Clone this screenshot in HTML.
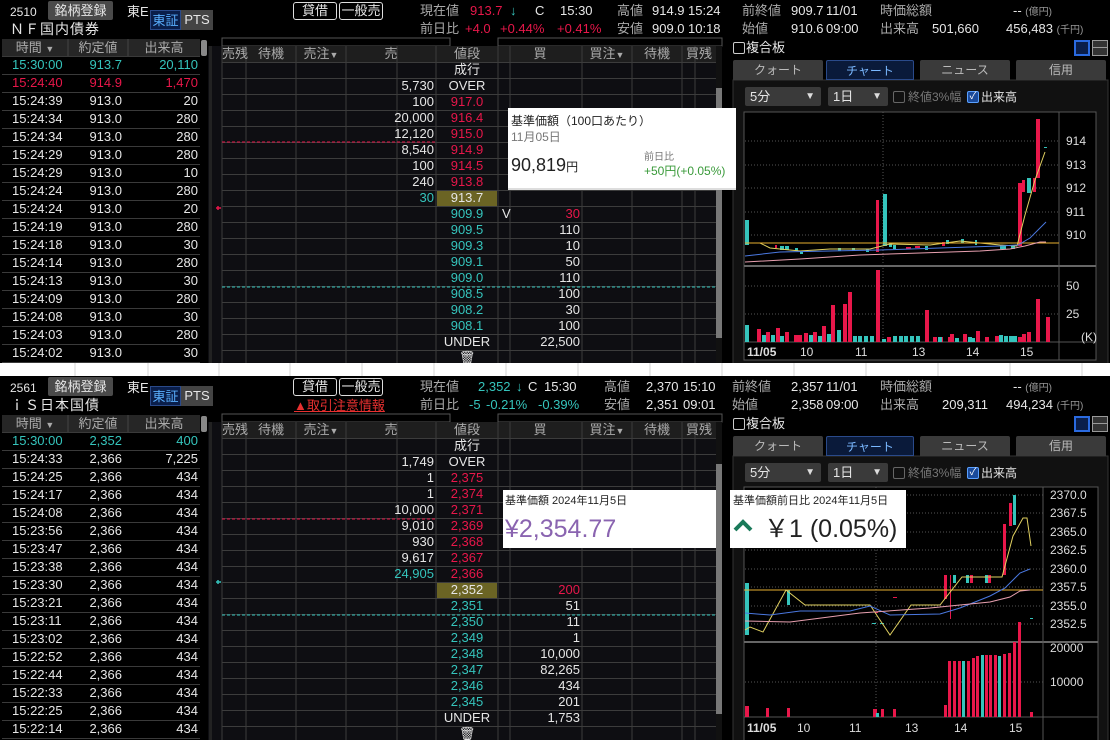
<!DOCTYPE html>
<html><head><meta charset="utf-8">
<style>
*{margin:0;padding:0;box-sizing:border-box}
body{width:1113px;height:740px;overflow:hidden;background:#fff;font-family:"Liberation Sans","Noto Sans CJK JP",sans-serif;font-size:13px;color:#e6e6e6;position:relative}
.p{position:absolute;left:0;width:1110px;background:#000;overflow:hidden}
.t{position:absolute;white-space:nowrap;line-height:16px}
.r{text-align:right}
.c{text-align:center}
.g{color:#aaa}
.red{color:#e8174a}
.tl{color:#35c4bc}
.btn{position:absolute;border:1px solid #ddd;border-radius:3px;text-align:center;line-height:16px;height:18px}
.tab{position:absolute;top:60px;height:20px;background:#3a3a3a;color:#bbb;text-align:center;line-height:20px;font-size:12px;border-radius:2px 2px 0 0}
.dd{position:absolute;top:87px;height:19px;background:#3a3a3a;border-radius:2px;line-height:19px;padding-left:5px;font-size:13px}
.dd i{position:absolute;right:6px;top:0;font-style:normal;font-size:10px;color:#ddd}
.cb{position:absolute;width:12px;height:12px;border:1px solid #888;border-radius:2px}
.ax{position:absolute;font-size:12px;line-height:14px;color:#ddd}
.lr{position:relative;height:18px}
</style></head><body>

<svg style="position:absolute;left:0;top:0" width="1113" height="740">
<rect width="1113" height="740" fill="#fff"/>
<g stroke="#d4d4d4"><line x1="75" y1="363" x2="75" y2="376"/><line x1="148" y1="363" x2="148" y2="376"/><line x1="219" y1="363" x2="219" y2="376"/><line x1="290" y1="363" x2="290" y2="376"/><line x1="362" y1="363" x2="362" y2="376"/><line x1="434" y1="363" x2="434" y2="376"/><line x1="506" y1="363" x2="506" y2="376"/><line x1="578" y1="363" x2="578" y2="376"/><line x1="650" y1="363" x2="650" y2="376"/><line x1="722" y1="363" x2="722" y2="376"/><line x1="794" y1="363" x2="794" y2="376"/><line x1="866" y1="363" x2="866" y2="376"/><line x1="938" y1="363" x2="938" y2="376"/><line x1="1010" y1="363" x2="1010" y2="376"/><line x1="1082" y1="363" x2="1082" y2="376"/></g>
</svg>

<!-- ================= TOP PANEL ================= -->
<div class="p" style="top:0;height:363px">
<svg style="position:absolute;left:0;top:0" width="1110" height="363">
<defs>
<pattern id="rl" x="0" y="56" width="10" height="18" patternUnits="userSpaceOnUse"><line x1="0" y1="0.5" x2="10" y2="0.5" stroke="#3a3a3a"/></pattern>
<pattern id="bl" x="0" y="62" width="10" height="16" patternUnits="userSpaceOnUse"><line x1="0" y1="0.5" x2="10" y2="0.5" stroke="#3c3c3c"/></pattern>
</defs>
<rect x="2" y="39" width="198" height="330" fill="#000"/>
<rect x="2" y="39" width="198" height="17" fill="#262626"/>
<rect x="2" y="56" width="198" height="310" fill="url(#rl)"/>
<line x1="68" y1="39" x2="68" y2="56" stroke="#444"/><line x1="128" y1="39" x2="128" y2="56" stroke="#444"/>
<rect x="201" y="40" width="6" height="16" rx="2" fill="#888"/>
<rect x="208" y="46" width="514" height="320" fill="#0e0e12"/>
<rect x="222" y="38" width="228" height="8" fill="none" stroke="#555"/>
<rect x="498" y="38" width="224" height="8" fill="none" stroke="#555"/>
<rect x="222" y="46" width="494" height="16" fill="#1e1e1e"/>
<rect x="222" y="62" width="494" height="304" fill="url(#bl)"/>
<g stroke="#3c3c3c"><line x1="222" y1="46" x2="222" y2="366"/><line x1="246" y1="46" x2="246" y2="366"/><line x1="296" y1="46" x2="296" y2="366"/><line x1="346" y1="46" x2="346" y2="366"/><line x1="397" y1="46" x2="397" y2="366"/><line x1="436" y1="46" x2="436" y2="366"/><line x1="498" y1="46" x2="498" y2="366"/><line x1="510" y1="46" x2="510" y2="366"/><line x1="582" y1="46" x2="582" y2="366"/><line x1="632" y1="46" x2="632" y2="366"/><line x1="682" y1="46" x2="682" y2="366"/><line x1="695" y1="46" x2="695" y2="366"/></g>
<rect x="716" y="46" width="6" height="320" fill="#111"/><rect x="716" y="88" width="6" height="250" fill="#777"/>
<rect x="209" y="46" width="3" height="320" fill="#222"/>
<rect x="437" y="191" width="60" height="15" fill="#6b6424"/>
<line x1="222" y1="142" x2="436" y2="142" stroke="#e8174a" stroke-dasharray="3 2"/>
<line x1="222" y1="287" x2="716" y2="287" stroke="#35c4bc" stroke-dasharray="3 2"/>
<path d="M216 208h5M218 206v4" stroke="#e8174a" stroke-width="1.5"/>
<rect x="733" y="80" width="375" height="286" fill="#111" stroke="#333"/>
<rect x="744" y="112" width="352" height="248" fill="#000" stroke="#555"/>
<line x1="744" y1="266" x2="1096" y2="266" stroke="#666" stroke-width="2"/>
<line x1="744" y1="342" x2="1096" y2="342" stroke="#555"/>
<line x1="1059" y1="112" x2="1059" y2="360" stroke="#555"/>
<g stroke="#555" stroke-dasharray="1 2"><line x1="745" y1="141" x2="1059" y2="141"/><line x1="745" y1="165" x2="1059" y2="165"/><line x1="745" y1="188" x2="1059" y2="188"/><line x1="745" y1="212" x2="1059" y2="212"/><line x1="745" y1="235" x2="1059" y2="235"/><line x1="745" y1="286" x2="1059" y2="286"/><line x1="745" y1="314" x2="1059" y2="314"/><line x1="883" y1="112" x2="883" y2="342"/></g>
<rect x="745" y="220" width="4" height="25" fill="#35c4bc"/>
<g fill="#35c4bc"><rect x="780" y="246" width="4" height="4"/><rect x="785" y="246" width="4" height="4"/><rect x="795" y="248" width="3" height="3"/><rect x="800" y="251" width="3" height="3"/><rect x="838" y="248" width="3" height="3"/><rect x="852" y="248" width="3" height="3"/><rect x="866" y="249" width="3" height="3"/><rect x="889" y="243" width="3" height="4"/><rect x="893" y="245" width="3" height="4"/><rect x="925" y="246" width="3" height="4"/><rect x="946" y="240" width="3" height="4"/><rect x="961" y="239" width="3" height="4"/><rect x="975" y="240" width="2" height="5"/><rect x="1000" y="246" width="6" height="3"/><rect x="1011" y="245" width="4" height="4"/><rect x="1027" y="178" width="4" height="15"/><rect x="1044" y="147" width="3" height="1"/></g>
<rect x="883" y="194" width="4" height="52" fill="#35c4bc"/>
<g fill="#e8174a"><rect x="775" y="245" width="2" height="3"/><rect x="876" y="200" width="3" height="52"/><rect x="906" y="247" width="5" height="2"/><rect x="915" y="246" width="5" height="2"/><rect x="942" y="242" width="3" height="4"/><rect x="1018" y="183" width="4" height="63"/><rect x="1022" y="180" width="3" height="12"/><rect x="1033" y="178" width="3" height="14"/><rect x="1036" y="119" width="4" height="59"/></g>
<polyline fill="none" stroke="#e0d060" stroke-width="1" points="745,243 760,243 770,248 800,251 830,249 870,249 890,244 930,245 960,241 1000,245 1017,246 1025,215 1035,180 1045,152"/>
<line x1="745" y1="243" x2="1059" y2="243" stroke="#e8b030"/>
<polyline fill="none" stroke="#4a78e0" points="745,256 780,252 830,251 880,250 940,248 1000,246 1018,245 1030,238 1046,222"/>
<polyline fill="none" stroke="#e8a0b0" points="745,262 800,259 860,255 920,253 980,251 1010,249 1025,246 1040,242 1046,242"/>
<g fill="#e8174a"><rect x="757" y="329" width="4" height="13"/><rect x="766" y="332" width="4" height="10"/><rect x="776" y="328" width="4" height="14"/><rect x="785" y="332" width="4" height="10"/><rect x="794" y="335" width="4" height="7"/><rect x="798" y="335" width="4" height="7"/><rect x="804" y="333" width="4" height="9"/><rect x="813" y="332" width="4" height="10"/><rect x="822" y="326" width="4" height="16"/><rect x="831" y="305" width="4" height="37"/><rect x="843" y="304" width="4" height="38"/><rect x="848" y="292" width="4" height="50"/><rect x="876" y="270" width="4" height="72"/><rect x="887" y="337" width="4" height="5"/><rect x="933" y="337" width="4" height="5"/><rect x="939" y="337" width="4" height="5"/><rect x="948" y="337" width="4" height="5"/><rect x="925" y="310" width="4" height="32"/><rect x="950" y="334" width="4" height="8"/><rect x="963" y="334" width="4" height="8"/><rect x="976" y="331" width="4" height="11"/><rect x="985" y="337" width="4" height="5"/><rect x="995" y="336" width="4" height="6"/><rect x="1018" y="337" width="4" height="5"/><rect x="1022" y="334" width="4" height="8"/><rect x="1027" y="332" width="4" height="10"/><rect x="1036" y="299" width="4" height="43"/><rect x="1046" y="317" width="4" height="25"/></g>
<g fill="#35c4bc"><rect x="745" y="325" width="4" height="17"/><rect x="762" y="335" width="4" height="7"/><rect x="771" y="335" width="4" height="7"/><rect x="780" y="336" width="4" height="6"/><rect x="809" y="335" width="4" height="7"/><rect x="818" y="336" width="4" height="6"/><rect x="827" y="334" width="4" height="8"/><rect x="837" y="330" width="4" height="12"/><rect x="853" y="336" width="4" height="6"/><rect x="858" y="336" width="4" height="6"/><rect x="864" y="336" width="4" height="6"/><rect x="870" y="336" width="4" height="6"/><rect x="882" y="339" width="4" height="3"/><rect x="893" y="336" width="4" height="6"/><rect x="899" y="336" width="4" height="6"/><rect x="904" y="336" width="4" height="6"/><rect x="910" y="336" width="4" height="6"/><rect x="916" y="336" width="4" height="6"/><rect x="938" y="337" width="4" height="5"/><rect x="955" y="338" width="4" height="4"/><rect x="968" y="337" width="4" height="5"/><rect x="971" y="338" width="4" height="4"/><rect x="999" y="335" width="4" height="7"/><rect x="1004" y="336" width="4" height="6"/><rect x="1009" y="336" width="4" height="6"/><rect x="1013" y="336" width="4" height="6"/></g>
</svg>

<div class="t" style="left:10px;top:4px;font-size:12px">2510</div>
<div class="t c" style="left:48px;top:1px;width:65px;height:19px;background:#4a4a4a;border-radius:2px;line-height:19px">銘柄登録</div>
<div class="t" style="left:127px;top:4px">東E</div>
<div class="t c" style="left:150px;top:10px;width:31px;height:20px;line-height:19px;background:#0a1e4a;border:1px solid #2a4a8a;color:#5ab0ff">東証</div>
<div class="t c" style="left:181px;top:10px;width:32px;height:20px;line-height:20px;background:#444">PTS</div>
<div class="t" style="left:10px;top:21px;font-size:14px;letter-spacing:1px">ＮＦ国内債券</div>
<div class="btn" style="left:293px;top:2px;width:44px">貸借</div>
<div class="btn" style="left:339px;top:2px;width:44px">一般売</div>
<div class="t g" style="left:420px;top:3px">現在値</div>
<div class="t red" style="left:470px;top:3px">913.7</div><div class="t tl" style="left:510px;top:3px">↓</div>
<div class="t" style="left:535px;top:3px">C</div><div class="t" style="left:560px;top:3px">15:30</div>
<div class="t g" style="left:617px;top:3px">高値</div><div class="t" style="left:652px;top:3px">914.9</div><div class="t" style="left:688px;top:3px">15:24</div>
<div class="t g" style="left:742px;top:3px">前終値</div><div class="t" style="left:791px;top:3px">909.7</div><div class="t" style="left:826px;top:3px">11/01</div>
<div class="t g" style="left:880px;top:3px">時価総額</div><div class="t" style="left:1013px;top:3px">-- <span style="font-size:10px;color:#999">(億円)</span></div>
<div class="t g" style="left:420px;top:21px">前日比</div>
<div class="t red" style="left:465px;top:21px">+4.0</div><div class="t red" style="left:500px;top:21px">+0.44%</div><div class="t red" style="left:557px;top:21px">+0.41%</div>
<div class="t g" style="left:617px;top:21px">安値</div><div class="t" style="left:652px;top:21px">909.0</div><div class="t" style="left:688px;top:21px">10:18</div>
<div class="t g" style="left:742px;top:21px">始値</div><div class="t" style="left:791px;top:21px">910.6</div><div class="t" style="left:826px;top:21px">09:00</div>
<div class="t g" style="left:880px;top:21px">出来高</div><div class="t" style="left:932px;top:21px">501,660</div><div class="t" style="left:1006px;top:21px">456,483 <span style="font-size:10px;color:#999">(千円)</span></div>

<div class="t g c" style="left:2px;top:40px;width:66px">時間 <span style="font-size:9px">▼</span></div>
<div class="t g c" style="left:68px;top:40px;width:60px">約定値</div>
<div class="t g c" style="left:128px;top:40px;width:72px">出来高</div>
<div style="position:absolute;left:12px;top:56px;width:186px;line-height:18px">
<div class="lr tl"><span>15:30:00</span><span style="position:absolute;right:76px">913.7</span><span style="position:absolute;right:0">20,110</span></div>
<div class="lr red"><span>15:24:40</span><span style="position:absolute;right:76px">914.9</span><span style="position:absolute;right:0">1,470</span></div>
<div class="lr"><span>15:24:39</span><span style="position:absolute;right:76px">913.0</span><span style="position:absolute;right:0">20</span></div>
<div class="lr"><span>15:24:34</span><span style="position:absolute;right:76px">913.0</span><span style="position:absolute;right:0">280</span></div>
<div class="lr"><span>15:24:34</span><span style="position:absolute;right:76px">913.0</span><span style="position:absolute;right:0">280</span></div>
<div class="lr"><span>15:24:29</span><span style="position:absolute;right:76px">913.0</span><span style="position:absolute;right:0">280</span></div>
<div class="lr"><span>15:24:29</span><span style="position:absolute;right:76px">913.0</span><span style="position:absolute;right:0">10</span></div>
<div class="lr"><span>15:24:24</span><span style="position:absolute;right:76px">913.0</span><span style="position:absolute;right:0">280</span></div>
<div class="lr"><span>15:24:24</span><span style="position:absolute;right:76px">913.0</span><span style="position:absolute;right:0">20</span></div>
<div class="lr"><span>15:24:19</span><span style="position:absolute;right:76px">913.0</span><span style="position:absolute;right:0">280</span></div>
<div class="lr"><span>15:24:18</span><span style="position:absolute;right:76px">913.0</span><span style="position:absolute;right:0">30</span></div>
<div class="lr"><span>15:24:14</span><span style="position:absolute;right:76px">913.0</span><span style="position:absolute;right:0">280</span></div>
<div class="lr"><span>15:24:13</span><span style="position:absolute;right:76px">913.0</span><span style="position:absolute;right:0">30</span></div>
<div class="lr"><span>15:24:09</span><span style="position:absolute;right:76px">913.0</span><span style="position:absolute;right:0">280</span></div>
<div class="lr"><span>15:24:08</span><span style="position:absolute;right:76px">913.0</span><span style="position:absolute;right:0">30</span></div>
<div class="lr"><span>15:24:03</span><span style="position:absolute;right:76px">913.0</span><span style="position:absolute;right:0">280</span></div>
<div class="lr"><span>15:24:02</span><span style="position:absolute;right:76px">913.0</span><span style="position:absolute;right:0">30</span></div>
</div>

<div class="t g c" style="left:222px;top:46px;width:24px">売残</div>
<div class="t g c" style="left:246px;top:46px;width:50px">待機</div>
<div class="t g c" style="left:296px;top:46px;width:50px">売注<span style="font-size:9px">▼</span></div>
<div class="t g c" style="left:346px;top:46px;width:90px">売</div>
<div class="t g c" style="left:436px;top:46px;width:62px">値段</div>
<div class="t g c" style="left:498px;top:46px;width:84px">買</div>
<div class="t g c" style="left:582px;top:46px;width:50px">買注<span style="font-size:9px">▼</span></div>
<div class="t g c" style="left:632px;top:46px;width:50px">待機</div>
<div class="t g c" style="left:682px;top:46px;width:34px">買残</div>
<div style="position:absolute;left:436px;top:62px;width:62px;line-height:16px;text-align:center">
<div>成行</div><div>OVER</div><div class="red">917.0</div><div class="red">916.4</div><div class="red">915.0</div><div class="red">914.9</div><div class="red">914.5</div><div class="red">913.8</div><div>913.7</div><div class="tl">909.9</div><div class="tl">909.5</div><div class="tl">909.3</div><div class="tl">909.1</div><div class="tl">909.0</div><div class="tl">908.5</div><div class="tl">908.2</div><div class="tl">908.1</div><div>UNDER</div><div>🗑</div>
</div>
<div style="position:absolute;left:346px;top:62px;width:88px;line-height:16px;text-align:right">
<div>&nbsp;</div><div>5,730</div><div>100</div><div>20,000</div><div>12,120</div><div>8,540</div><div>100</div><div>240</div><div class="tl">30</div>
</div>
<div style="position:absolute;left:498px;top:62px;width:82px;line-height:16px;text-align:right">
<div>&nbsp;</div><div>&nbsp;</div><div>&nbsp;</div><div>&nbsp;</div><div>&nbsp;</div><div>&nbsp;</div><div>&nbsp;</div><div>&nbsp;</div><div>&nbsp;</div><div class="red">30</div><div>110</div><div>10</div><div>50</div><div>110</div><div>100</div><div>30</div><div>100</div><div>22,500</div>
</div>
<div class="t" style="left:502px;top:206px">V</div>

<div class="cb" style="left:733px;top:42px;border-color:#ccc"></div><div class="t" style="left:746px;top:40px">複合板</div>
<div style="position:absolute;left:1074px;top:40px;width:16px;height:16px;border:2px solid #2a6ae0;background:#0a1e4a"></div>
<div style="position:absolute;left:1092px;top:40px;width:16px;height:16px;border:1px solid #999;background:#333"><div style="position:absolute;left:0;top:6px;width:14px;height:1px;background:#999"></div></div>
<div class="tab" style="left:733px;width:90px">クォート</div>
<div class="tab" style="left:826px;width:88px;background:#0a1a3a;border:1px solid #2a4a8a;color:#7ab8ff">チャート</div>
<div class="tab" style="left:920px;width:90px">ニュース</div>
<div class="tab" style="left:1016px;width:90px">信用</div>
<div class="dd" style="left:745px;width:76px">5分<i>▼</i></div>
<div class="dd" style="left:828px;width:60px">1日<i>▼</i></div>
<div class="cb" style="left:893px;top:91px;border-color:#666"></div><div class="t" style="left:908px;top:89px;color:#777;font-size:12px">終値3%幅</div>
<div class="cb" style="left:967px;top:91px;border-color:#5aa0ff;background:#1a4a9a;color:#fff;font-size:10px;line-height:10px;text-align:center">✓</div><div class="t" style="left:981px;top:89px;font-size:12px">出来高</div>
<div class="ax" style="left:1066px;top:134px">914</div><div class="ax" style="left:1066px;top:158px">913</div><div class="ax" style="left:1066px;top:181px">912</div><div class="ax" style="left:1066px;top:205px">911</div><div class="ax" style="left:1066px;top:228px">910</div>
<div class="ax" style="left:1066px;top:279px">50</div><div class="ax" style="left:1066px;top:307px">25</div><div class="ax" style="left:1081px;top:330px">(K)</div>
<div class="ax" style="left:747px;top:345px;font-weight:bold">11/05</div><div class="ax" style="left:800px;top:345px">10</div><div class="ax" style="left:855px;top:345px">11</div><div class="ax" style="left:912px;top:345px">13</div><div class="ax" style="left:966px;top:345px">14</div><div class="ax" style="left:1020px;top:345px">15</div>

<div style="position:absolute;left:508px;top:108px;width:228px;height:82px;background:#fff;border-bottom:2px solid #ddd;color:#222">
<div class="t" style="left:3px;top:5px;font-size:12px">基準価額（100口あたり）</div>
<div class="t" style="left:3px;top:21px;font-size:12px;color:#777">11月05日</div>
<div class="t" style="left:3px;top:47px;font-size:18px;line-height:20px">90,819<span style="font-size:12px">円</span></div>
<div class="t" style="left:136px;top:42px;font-size:10px;color:#777">前日比</div>
<div class="t" style="left:136px;top:55px;font-size:12px;color:#3a9a3a">+50円(+0.05%)</div>
</div>
</div>

<!-- ================= BOTTOM PANEL ================= -->
<div class="p" style="top:376px;height:364px">
<svg style="position:absolute;left:0;top:0" width="1110" height="364">
<defs>
<pattern id="rl2" x="0" y="56" width="10" height="18" patternUnits="userSpaceOnUse"><line x1="0" y1="0.5" x2="10" y2="0.5" stroke="#3a3a3a"/></pattern>
<pattern id="bl2" x="0" y="62" width="10" height="16" patternUnits="userSpaceOnUse"><line x1="0" y1="0.5" x2="10" y2="0.5" stroke="#3c3c3c"/></pattern>
</defs>
<rect x="2" y="39" width="198" height="330" fill="#000"/>
<rect x="2" y="39" width="198" height="17" fill="#262626"/>
<rect x="2" y="56" width="198" height="310" fill="url(#rl2)"/>
<line x1="68" y1="39" x2="68" y2="56" stroke="#444"/><line x1="128" y1="39" x2="128" y2="56" stroke="#444"/>
<rect x="201" y="40" width="6" height="16" rx="2" fill="#888"/>
<rect x="208" y="46" width="514" height="320" fill="#0e0e12"/>
<rect x="222" y="38" width="228" height="8" fill="none" stroke="#555"/>
<rect x="498" y="38" width="224" height="8" fill="none" stroke="#555"/>
<rect x="222" y="46" width="494" height="16" fill="#1e1e1e"/>
<rect x="222" y="62" width="494" height="304" fill="url(#bl2)"/>
<g stroke="#3c3c3c"><line x1="222" y1="46" x2="222" y2="366"/><line x1="246" y1="46" x2="246" y2="366"/><line x1="296" y1="46" x2="296" y2="366"/><line x1="346" y1="46" x2="346" y2="366"/><line x1="397" y1="46" x2="397" y2="366"/><line x1="436" y1="46" x2="436" y2="366"/><line x1="498" y1="46" x2="498" y2="366"/><line x1="510" y1="46" x2="510" y2="366"/><line x1="582" y1="46" x2="582" y2="366"/><line x1="632" y1="46" x2="632" y2="366"/><line x1="682" y1="46" x2="682" y2="366"/><line x1="695" y1="46" x2="695" y2="366"/></g>
<rect x="716" y="46" width="6" height="320" fill="#111"/><rect x="716" y="88" width="6" height="250" fill="#777"/>
<rect x="209" y="46" width="3" height="320" fill="#222"/>
<rect x="437" y="207" width="60" height="15" fill="#6b6424"/>
<line x1="222" y1="143" x2="436" y2="143" stroke="#e8174a" stroke-dasharray="3 2"/>
<line x1="222" y1="239" x2="716" y2="239" stroke="#35c4bc" stroke-dasharray="3 2"/>
<path d="M216 206h5M218 204v4" stroke="#35c4bc" stroke-width="1.5"/>
<rect x="733" y="80" width="375" height="290" fill="#111" stroke="#333"/>
<rect x="744" y="111" width="354" height="260" fill="#000" stroke="#555"/>
<line x1="744" y1="266" x2="1098" y2="266" stroke="#666" stroke-width="2"/>
<line x1="744" y1="341" x2="1098" y2="341" stroke="#555"/>
<line x1="1043" y1="111" x2="1043" y2="364" stroke="#555"/>
<g stroke="#555" stroke-dasharray="1 2"><line x1="745" y1="119" x2="1043" y2="119"/><line x1="745" y1="137" x2="1043" y2="137"/><line x1="745" y1="156" x2="1043" y2="156"/><line x1="745" y1="174" x2="1043" y2="174"/><line x1="745" y1="193" x2="1043" y2="193"/><line x1="745" y1="211" x2="1043" y2="211"/><line x1="745" y1="230" x2="1043" y2="230"/><line x1="745" y1="248" x2="1043" y2="248"/><line x1="745" y1="306" x2="1043" y2="306"/><line x1="876" y1="111" x2="876" y2="341"/></g>
<rect x="745" y="207" width="4" height="52" fill="#35c4bc"/>
<rect x="787" y="214" width="3" height="15" fill="#35c4bc"/>
<g fill="#e8174a"><rect x="944" y="199" width="3" height="24"/><rect x="950" y="199" width="1" height="44"/><rect x="970" y="199" width="3" height="8"/><rect x="988" y="199" width="3" height="8"/><rect x="1003" y="148" width="3" height="51"/><rect x="1009" y="127" width="3" height="23"/><rect x="875" y="236" width="3" height="1"/><rect x="893" y="221" width="4" height="1"/></g>
<g fill="#35c4bc"><rect x="953" y="199" width="3" height="8"/><rect x="966" y="199" width="3" height="8"/><rect x="985" y="199" width="3" height="8"/><rect x="1013" y="119" width="3" height="30"/><rect x="872" y="247" width="4" height="1"/><rect x="880" y="247" width="4" height="1"/><rect x="1030" y="242" width="3" height="1"/></g>
<line x1="744" y1="214" x2="1043" y2="214" stroke="#e8b030"/>
<polyline fill="none" stroke="#e0d060" points="745,254 750,251 763,256 786,214 805,229 870,229 890,259 911,229 940,229 962,201 1002,201 1013,160 1023,142 1027,142 1031,170"/>
<polyline fill="none" stroke="#4a78e0" points="745,237 770,239 800,235 850,235 870,230 890,239 940,238 960,232 990,220 1005,212 1020,197 1030,193"/>
<polyline fill="none" stroke="#e8a0b0" points="745,245 790,246 860,237 930,232 990,226 1010,221 1020,215 1030,214"/>
<g fill="#e8174a"><rect x="745" y="330" width="4" height="11"/><rect x="766" y="332" width="3" height="9"/><rect x="787" y="332" width="3" height="9"/><rect x="873" y="333" width="4" height="8"/><rect x="881" y="333" width="3" height="8"/><rect x="893" y="333" width="3" height="8"/><rect x="944" y="329" width="3" height="12"/><rect x="948" y="285" width="3" height="56"/><rect x="953" y="285" width="3" height="56"/><rect x="958" y="285" width="3" height="56"/><rect x="967" y="285" width="3" height="56"/><rect x="972" y="282" width="3" height="59"/><rect x="976" y="280" width="3" height="61"/><rect x="985" y="279" width="3" height="62"/><rect x="989" y="279" width="3" height="62"/><rect x="994" y="279" width="3" height="62"/><rect x="1003" y="278" width="3" height="63"/><rect x="1008" y="277" width="3" height="64"/><rect x="1013" y="266" width="3" height="75"/><rect x="1018" y="246" width="3" height="95"/><rect x="1030" y="336" width="3" height="5"/></g>
<g fill="#35c4bc"><rect x="962" y="285" width="3" height="56"/><rect x="981" y="279" width="3" height="62"/><rect x="998" y="280" width="3" height="61"/><rect x="876" y="337" width="3" height="4"/></g>
</svg>

<div class="t" style="left:10px;top:4px;font-size:12px">2561</div>
<div class="t c" style="left:48px;top:1px;width:65px;height:19px;background:#4a4a4a;border-radius:2px;line-height:19px">銘柄登録</div>
<div class="t" style="left:127px;top:4px">東E</div>
<div class="t c" style="left:150px;top:10px;width:31px;height:20px;line-height:19px;background:#0a1e4a;border:1px solid #2a4a8a;color:#5ab0ff">東証</div>
<div class="t c" style="left:181px;top:10px;width:32px;height:20px;line-height:20px;background:#444">PTS</div>
<div class="t" style="left:10px;top:21px;font-size:14px;letter-spacing:1px">ｉＳ日本国債</div>
<div class="btn" style="left:293px;top:2px;width:44px">貸借</div>
<div class="btn" style="left:339px;top:2px;width:44px">一般売</div>
<div class="t" style="left:294px;top:22px;color:#e83030;text-decoration:underline">▲取引注意情報</div>
<div class="t g" style="left:420px;top:3px">現在値</div>
<div class="t tl" style="left:478px;top:3px">2,352</div><div class="t tl" style="left:516px;top:3px">↓</div>
<div class="t" style="left:528px;top:3px">C</div><div class="t" style="left:544px;top:3px">15:30</div>
<div class="t g" style="left:604px;top:3px">高値</div><div class="t" style="left:646px;top:3px">2,370</div><div class="t" style="left:683px;top:3px">15:10</div>
<div class="t g" style="left:732px;top:3px">前終値</div><div class="t" style="left:791px;top:3px">2,357</div><div class="t" style="left:826px;top:3px">11/01</div>
<div class="t g" style="left:880px;top:3px">時価総額</div><div class="t" style="left:1013px;top:3px">-- <span style="font-size:10px;color:#999">(億円)</span></div>
<div class="t g" style="left:420px;top:21px">前日比</div>
<div class="t tl" style="left:469px;top:21px">-5</div><div class="t tl" style="left:486px;top:21px">-0.21%</div><div class="t tl" style="left:538px;top:21px">-0.39%</div>
<div class="t g" style="left:604px;top:21px">安値</div><div class="t" style="left:646px;top:21px">2,351</div><div class="t" style="left:683px;top:21px">09:01</div>
<div class="t g" style="left:732px;top:21px">始値</div><div class="t" style="left:791px;top:21px">2,358</div><div class="t" style="left:826px;top:21px">09:00</div>
<div class="t g" style="left:880px;top:21px">出来高</div><div class="t" style="left:942px;top:21px">209,311</div><div class="t" style="left:1006px;top:21px">494,234 <span style="font-size:10px;color:#999">(千円)</span></div>

<div class="t g c" style="left:2px;top:40px;width:66px">時間 <span style="font-size:9px">▼</span></div>
<div class="t g c" style="left:68px;top:40px;width:60px">約定値</div>
<div class="t g c" style="left:128px;top:40px;width:72px">出来高</div>
<div style="position:absolute;left:12px;top:56px;width:186px;line-height:18px">
<div class="lr tl"><span>15:30:00</span><span style="position:absolute;right:76px">2,352</span><span style="position:absolute;right:0">400</span></div>
<div class="lr"><span>15:24:33</span><span style="position:absolute;right:76px">2,366</span><span style="position:absolute;right:0">7,225</span></div>
<div class="lr"><span>15:24:25</span><span style="position:absolute;right:76px">2,366</span><span style="position:absolute;right:0">434</span></div>
<div class="lr"><span>15:24:17</span><span style="position:absolute;right:76px">2,366</span><span style="position:absolute;right:0">434</span></div>
<div class="lr"><span>15:24:08</span><span style="position:absolute;right:76px">2,366</span><span style="position:absolute;right:0">434</span></div>
<div class="lr"><span>15:23:56</span><span style="position:absolute;right:76px">2,366</span><span style="position:absolute;right:0">434</span></div>
<div class="lr"><span>15:23:47</span><span style="position:absolute;right:76px">2,366</span><span style="position:absolute;right:0">434</span></div>
<div class="lr"><span>15:23:38</span><span style="position:absolute;right:76px">2,366</span><span style="position:absolute;right:0">434</span></div>
<div class="lr"><span>15:23:30</span><span style="position:absolute;right:76px">2,366</span><span style="position:absolute;right:0">434</span></div>
<div class="lr"><span>15:23:21</span><span style="position:absolute;right:76px">2,366</span><span style="position:absolute;right:0">434</span></div>
<div class="lr"><span>15:23:11</span><span style="position:absolute;right:76px">2,366</span><span style="position:absolute;right:0">434</span></div>
<div class="lr"><span>15:23:02</span><span style="position:absolute;right:76px">2,366</span><span style="position:absolute;right:0">434</span></div>
<div class="lr"><span>15:22:52</span><span style="position:absolute;right:76px">2,366</span><span style="position:absolute;right:0">434</span></div>
<div class="lr"><span>15:22:44</span><span style="position:absolute;right:76px">2,366</span><span style="position:absolute;right:0">434</span></div>
<div class="lr"><span>15:22:33</span><span style="position:absolute;right:76px">2,366</span><span style="position:absolute;right:0">434</span></div>
<div class="lr"><span>15:22:25</span><span style="position:absolute;right:76px">2,366</span><span style="position:absolute;right:0">434</span></div>
<div class="lr"><span>15:22:14</span><span style="position:absolute;right:76px">2,366</span><span style="position:absolute;right:0">434</span></div>
</div>

<div class="t g c" style="left:222px;top:46px;width:24px">売残</div>
<div class="t g c" style="left:246px;top:46px;width:50px">待機</div>
<div class="t g c" style="left:296px;top:46px;width:50px">売注<span style="font-size:9px">▼</span></div>
<div class="t g c" style="left:346px;top:46px;width:90px">売</div>
<div class="t g c" style="left:436px;top:46px;width:62px">値段</div>
<div class="t g c" style="left:498px;top:46px;width:84px">買</div>
<div class="t g c" style="left:582px;top:46px;width:50px">買注<span style="font-size:9px">▼</span></div>
<div class="t g c" style="left:632px;top:46px;width:50px">待機</div>
<div class="t g c" style="left:682px;top:46px;width:34px">買残</div>
<div style="position:absolute;left:436px;top:62px;width:62px;line-height:16px;text-align:center">
<div>成行</div><div>OVER</div><div class="red">2,375</div><div class="red">2,374</div><div class="red">2,371</div><div class="red">2,369</div><div class="red">2,368</div><div class="red">2,367</div><div class="red">2,366</div><div>2,352</div><div class="tl">2,351</div><div class="tl">2,350</div><div class="tl">2,349</div><div class="tl">2,348</div><div class="tl">2,347</div><div class="tl">2,346</div><div class="tl">2,345</div><div>UNDER</div><div>🗑</div>
</div>
<div style="position:absolute;left:346px;top:62px;width:88px;line-height:16px;text-align:right">
<div>&nbsp;</div><div>1,749</div><div>1</div><div>1</div><div>10,000</div><div>9,010</div><div>930</div><div>9,617</div><div class="tl">24,905</div>
</div>
<div style="position:absolute;left:498px;top:62px;width:82px;line-height:16px;text-align:right">
<div>&nbsp;</div><div>&nbsp;</div><div>&nbsp;</div><div>&nbsp;</div><div>&nbsp;</div><div>&nbsp;</div><div>&nbsp;</div><div>&nbsp;</div><div>&nbsp;</div><div class="red">200</div><div>51</div><div>11</div><div>1</div><div>10,000</div><div>82,265</div><div>434</div><div>201</div><div>1,753</div>
</div>

<div class="cb" style="left:733px;top:42px;border-color:#ccc"></div><div class="t" style="left:746px;top:40px">複合板</div>
<div style="position:absolute;left:1074px;top:40px;width:16px;height:16px;border:2px solid #2a6ae0;background:#0a1e4a"></div>
<div style="position:absolute;left:1092px;top:40px;width:16px;height:16px;border:1px solid #999;background:#333"><div style="position:absolute;left:0;top:6px;width:14px;height:1px;background:#999"></div></div>
<div class="tab" style="left:733px;width:90px">クォート</div>
<div class="tab" style="left:826px;width:88px;background:#0a1a3a;border:1px solid #2a4a8a;color:#7ab8ff">チャート</div>
<div class="tab" style="left:920px;width:90px">ニュース</div>
<div class="tab" style="left:1016px;width:90px">信用</div>
<div class="dd" style="left:745px;width:76px">5分<i>▼</i></div>
<div class="dd" style="left:828px;width:60px">1日<i>▼</i></div>
<div class="cb" style="left:893px;top:91px;border-color:#666"></div><div class="t" style="left:908px;top:89px;color:#777;font-size:12px">終値3%幅</div>
<div class="cb" style="left:967px;top:91px;border-color:#5aa0ff;background:#1a4a9a;color:#fff;font-size:10px;line-height:10px;text-align:center">✓</div><div class="t" style="left:981px;top:89px;font-size:12px">出来高</div>
<div class="ax" style="left:1050px;top:112px">2370.0</div><div class="ax" style="left:1050px;top:130px">2367.5</div><div class="ax" style="left:1050px;top:149px">2365.0</div><div class="ax" style="left:1050px;top:167px">2362.5</div><div class="ax" style="left:1050px;top:186px">2360.0</div><div class="ax" style="left:1050px;top:204px">2357.5</div><div class="ax" style="left:1050px;top:223px">2355.0</div><div class="ax" style="left:1050px;top:241px">2352.5</div>
<div class="ax" style="left:1050px;top:265px">20000</div><div class="ax" style="left:1050px;top:299px">10000</div>
<div class="ax" style="left:747px;top:345px;font-weight:bold">11/05</div><div class="ax" style="left:797px;top:345px">10</div><div class="ax" style="left:849px;top:345px">11</div><div class="ax" style="left:905px;top:345px">13</div><div class="ax" style="left:954px;top:345px">14</div><div class="ax" style="left:1009px;top:345px">15</div>

<div style="position:absolute;left:503px;top:114px;width:213px;height:58px;background:#fff;color:#222">
<div class="t" style="left:2px;top:3px;font-size:11px">基準価額 2024年11月5日</div>
<div class="t" style="left:2px;top:24px;font-size:25px;line-height:30px;color:#8a64b0">¥2,354.77</div>
</div>
<div style="position:absolute;left:730px;top:114px;width:176px;height:58px;background:#fff;color:#222">
<div class="t" style="left:3px;top:3px;font-size:11px">基準価額前日比 2024年11月5日</div>
<svg style="position:absolute;left:3px;top:28px" width="20" height="14"><path d="M2 12L10 4L18 12" fill="none" stroke="#1a7a5a" stroke-width="4"/></svg>
<div class="t" style="left:34px;top:24px;font-size:25px;line-height:30px">￥1 (0.05%)</div>
</div>
</div>

</body></html>
